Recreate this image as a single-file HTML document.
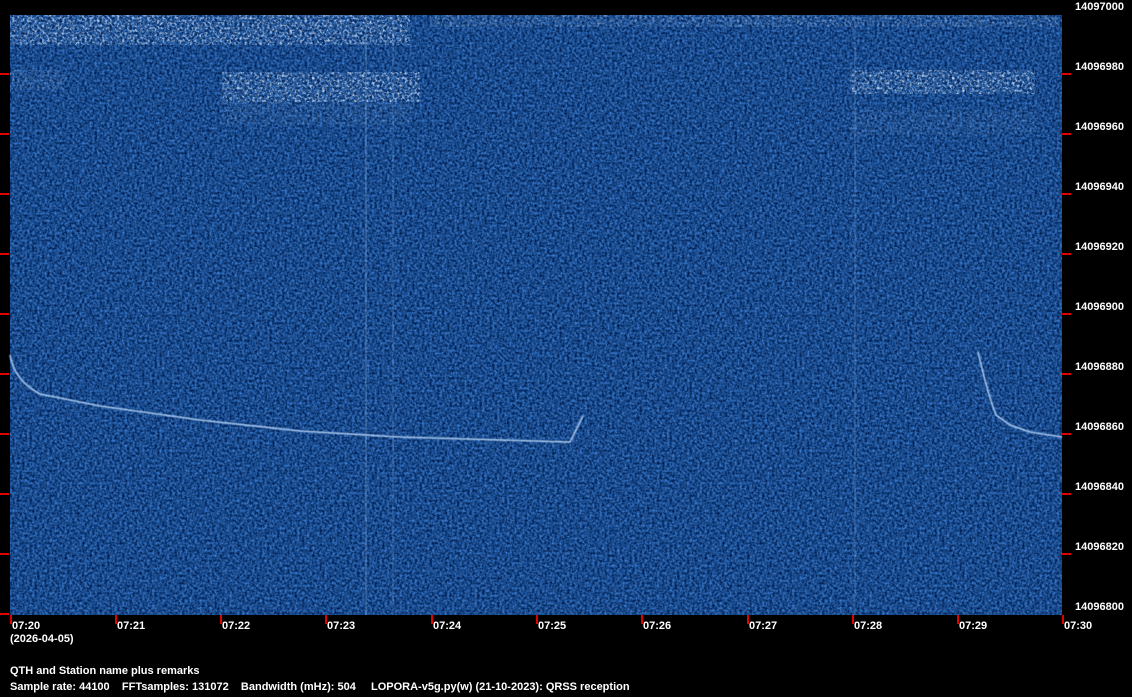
<!DOCTYPE html>
<html><head><meta charset="utf-8"><style>
html,body{margin:0;padding:0;background:#000;width:1132px;height:697px;overflow:hidden;position:relative;font-family:"Liberation Sans",sans-serif;}
.t{position:absolute;color:#fff;font-size:11px;font-weight:bold;white-space:nowrap;line-height:12px;}
</style></head><body>
<svg width="1132" height="697" style="position:absolute;left:0;top:0">
<defs>
<filter id="n" x="0" y="0" width="100%" height="100%" color-interpolation-filters="sRGB">
<feTurbulence type="fractalNoise" baseFrequency="0.4" numOctaves="2" seed="3"/>
<feColorMatrix type="matrix" values="0.4 0 0 0 -0.1  0.6 0 0 0 -0.01  0.8 0 0 0 0.15  0 0 0 0 1"/>
</filter>
<filter id="w" x="0" y="0" width="100%" height="100%" color-interpolation-filters="sRGB">
<feTurbulence type="fractalNoise" baseFrequency="0.4" numOctaves="2" seed="7"/>
<feColorMatrix type="matrix" values="0 0 0 0 0.9  0 0 0 0 0.95  0 0 0 0 1  3 0 0 0 -1.4"/>
</filter>
<filter id="b"><feGaussianBlur stdDeviation="0.6"/></filter>
</defs>
<rect x="10" y="15" width="1052" height="600" filter="url(#n)"/>
<g opacity="0.75">
<rect x="10" y="15" width="400" height="30" filter="url(#w)"/>
<rect x="10" y="70" width="55" height="20" filter="url(#w)" opacity="0.4"/>
<rect x="222" y="72" width="198" height="30" filter="url(#w)"/>
<rect x="222" y="100" width="190" height="25" filter="url(#w)" opacity="0.3"/>
<rect x="430" y="15" width="630" height="12" filter="url(#w)" opacity="0.5"/>
<rect x="850" y="70" width="185" height="24" filter="url(#w)"/>
<rect x="850" y="110" width="185" height="25" filter="url(#w)" opacity="0.25"/>
</g>
<g stroke="#8fb4e0" stroke-width="1" opacity="0.5">
<line x1="366" y1="15" x2="366" y2="615"/><line x1="393" y1="15" x2="393" y2="615" opacity="0.6"/><line x1="855" y1="15" x2="855" y2="615" opacity="0.7"/>
</g>
<g fill="none" stroke="#a9c9ee" stroke-width="1.6" filter="url(#b)">
<path d="M10 355 Q14 380 40 394 L100 406 L200 420 L300 431 L400 437 L570 442 L583 416"/>
<path d="M978 352 Q988 395 996 415 L1010 425 L1030 432 L1062 437"/>
</g>
<g fill="#e00000">
<rect x="0" y="73" width="9" height="2"/><rect x="0" y="133" width="9" height="2"/><rect x="0" y="193" width="9" height="2"/><rect x="0" y="253" width="9" height="2"/><rect x="0" y="313" width="9" height="2"/><rect x="0" y="373" width="9" height="2"/><rect x="0" y="433" width="9" height="2"/><rect x="0" y="493" width="9" height="2"/><rect x="0" y="553" width="9" height="2"/><rect x="0" y="613" width="9" height="2"/>
<rect x="1062" y="73" width="9" height="2"/><rect x="1062" y="133" width="9" height="2"/><rect x="1062" y="193" width="9" height="2"/><rect x="1062" y="253" width="9" height="2"/><rect x="1062" y="313" width="9" height="2"/><rect x="1062" y="373" width="9" height="2"/><rect x="1062" y="433" width="9" height="2"/><rect x="1062" y="493" width="9" height="2"/><rect x="1062" y="553" width="9" height="2"/>
<rect x="10" y="615" width="2" height="9"/><rect x="115" y="615" width="2" height="9"/><rect x="220" y="615" width="2" height="9"/><rect x="325" y="615" width="2" height="9"/><rect x="431" y="615" width="2" height="9"/><rect x="536" y="615" width="2" height="9"/><rect x="641" y="615" width="2" height="9"/><rect x="747" y="615" width="2" height="9"/><rect x="852" y="615" width="2" height="9"/><rect x="957" y="615" width="2" height="9"/><rect x="1062" y="615" width="2" height="9"/>
</g>
</svg>
<div class="t" style="left:1075px;top:1px">14097000</div>
<div class="t" style="left:1075px;top:61px">14096980</div>
<div class="t" style="left:1075px;top:121px">14096960</div>
<div class="t" style="left:1075px;top:181px">14096940</div>
<div class="t" style="left:1075px;top:241px">14096920</div>
<div class="t" style="left:1075px;top:301px">14096900</div>
<div class="t" style="left:1075px;top:361px">14096880</div>
<div class="t" style="left:1075px;top:421px">14096860</div>
<div class="t" style="left:1075px;top:481px">14096840</div>
<div class="t" style="left:1075px;top:541px">14096820</div>
<div class="t" style="left:1075px;top:601px">14096800</div>
<div class="t" style="left:12px;top:620px">07:20</div>
<div class="t" style="left:117px;top:620px">07:21</div>
<div class="t" style="left:222px;top:620px">07:22</div>
<div class="t" style="left:327px;top:620px">07:23</div>
<div class="t" style="left:433px;top:620px">07:24</div>
<div class="t" style="left:538px;top:620px">07:25</div>
<div class="t" style="left:643px;top:620px">07:26</div>
<div class="t" style="left:749px;top:620px">07:27</div>
<div class="t" style="left:854px;top:620px">07:28</div>
<div class="t" style="left:959px;top:620px">07:29</div>
<div class="t" style="left:1064px;top:620px">07:30</div>
<div class="t" style="left:10px;top:633px">(2026-04-05)</div>
<div class="t" style="left:10px;top:665px">QTH and Station name plus remarks</div>
<div class="t" style="left:10px;top:681px">Sample rate: 44100&nbsp;&nbsp;&nbsp;&nbsp;FFTsamples: 131072&nbsp;&nbsp;&nbsp;&nbsp;Bandwidth (mHz): 504</div>
<div class="t" style="left:371px;top:681px">LOPORA-v5g.py(w) (21-10-2023): QRSS reception</div>
</body></html>
